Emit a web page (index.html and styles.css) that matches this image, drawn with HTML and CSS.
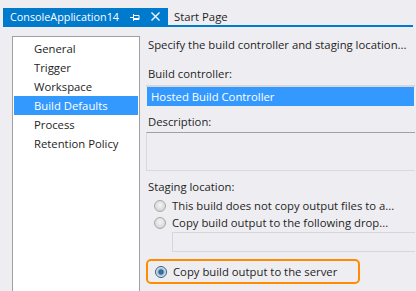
FILE: index.html
```html
<!DOCTYPE html>
<html lang="en">
<head>
    <meta charset="UTF-8">
    <title>ConsoleApplication14</title>
    <link rel="stylesheet" href="styles.css">
</head>
<body>
    <div class="tabstrip">
        <div class="tab active">
            <span class="tab-title">ConsoleApplication14</span>
            <svg class="pin" width="10" height="8" viewBox="0 0 10 8">
                <path d="M0 4.5h3M3.5 1v7M3.5 2.5h5.5v4h-5.5M3.5 5.5h5.5" stroke="#fff" stroke-width="1" fill="none"/>
            </svg>
            <svg class="close" width="9" height="9" viewBox="0 0 9 9">
                <path d="M0.5 0.5l8 8M8.5 0.5l-8 8" stroke="#fff" stroke-width="1.3"/>
            </svg>
        </div>
        <div class="tab">Start Page</div>
    </div>

    <div class="main">
        <ul class="nav">
            <li>General</li>
            <li>Trigger</li>
            <li>Workspace</li>
            <li class="selected">Build Defaults</li>
            <li>Process</li>
            <li>Retention Policy</li>
        </ul>

        <div class="page">
            <p class="intro">Specify the build controller and staging location...</p>

            <p class="label">Build controller:</p>
            <div class="combo"><span>Hosted Build Controller</span></div>

            <p class="label">Description:</p>
            <div class="desc"></div>

            <p class="label staging">Staging location:</p>
            <div class="radio"><span class="dot"></span>This build does not copy output files to a...</div>
            <div class="radio"><span class="dot"></span>Copy build output to the following drop...</div>
            <div class="drop"></div>

            <div class="callout">
                <div class="radio"><span class="dot on"></span>Copy build output to the server</div>
            </div>
        </div>
    </div>
</body>
</html>
```

FILE: styles.css
```css
body {
    margin: 0;
    background-color: #eeeef2;
    color: #1e1e1e;
    font-family: "Open Sans", "Noto Sans", sans-serif;
    font-size: 11.3px;
    height: 291px;
    overflow: hidden;
}
.tabstrip {
    display: flex;
    width: 410px;
    margin-left: 3px;
    padding-top: 8px;
    border-bottom: 2px solid #007acc;
    font-size: 11.3px;
}
.tab {
    height: 17px;
    line-height: 17px;
    padding: 0 6px;
}
.tab.active {
    display: flex;
    align-items: center;
    width: 165px;
    box-sizing: border-box;
    padding: 0 7px;
    background-color: #007acc;
    color: #fff;
    font-size: 10.8px;
}
.tab-title {
    flex: 1;
}
.pin {
    margin-right: 11px;
}
.close {
    margin-right: 1px;
}
.main {
    display: flex;
    padding: 9px 0 0 12px;
}
.nav {
    list-style: none;
    margin: 0;
    padding: 2px 1px 0 1px;
    width: 124px;
    height: 253px;
    background-color: #fff;
    border: 1px solid #a0a0a0;
    border-bottom: none;
}
.nav li {
    height: 19px;
    line-height: 19px;
    padding-left: 20px;
}
.nav li.selected {
    background-color: #3399ff;
    color: #fff;
}
.page {
    margin-left: 6px;
    width: 269px;
}
.page p {
    margin: 0;
}
.intro {
    padding: 1px 0 0 2px;
    height: 21px;
    line-height: 16px;
}
.label {
    padding-left: 2px;
    height: 18px;
    line-height: 16px;
    margin-top: 8px !important;
}
.combo {
    margin-top: 1px;
    border-top: 2px solid #d6d6dc;
    padding: 0 1px;
}
.combo span {
    display: block;
    height: 19px;
    line-height: 19px;
    padding-left: 4px;
    background-color: #3399ff;
    color: #fff;
}
.desc {
    height: 37px;
    border: 1px solid #dadade;
    border-top-color: #a0a0a0;
    border-right: none;
}
.label.staging {
    margin-top: 8px !important;
}
.radio {
    display: flex;
    align-items: center;
    height: 17px;
    margin-left: 8px;
}
.dot {
    width: 10px;
    height: 10px;
    border-radius: 50%;
    border: 1px solid #a8a8a8;
    background: radial-gradient(circle at 50% 40%, #f4f4f4 0, #d8d8d8 70%);
    margin-right: 6px;
}
.dot.on {
    border-color: #3c5a72;
    background: radial-gradient(circle, #3e7fb0 0, #2b5f8a 2px, #8fb8d8 3px, #e8f0f8 5px);
}
.drop {
    margin: 1px 0 0 26px;
    height: 18px;
    border: 1px solid #d6d6dc;
    border-right: none;
}
.callout {
    margin-top: 7px;
    width: 210px;
    height: 21px;
    border: 2px solid #ff8c00;
    border-radius: 5px;
    display: flex;
    align-items: center;
}
.callout .radio {
    margin-left: 7px;
}
```
